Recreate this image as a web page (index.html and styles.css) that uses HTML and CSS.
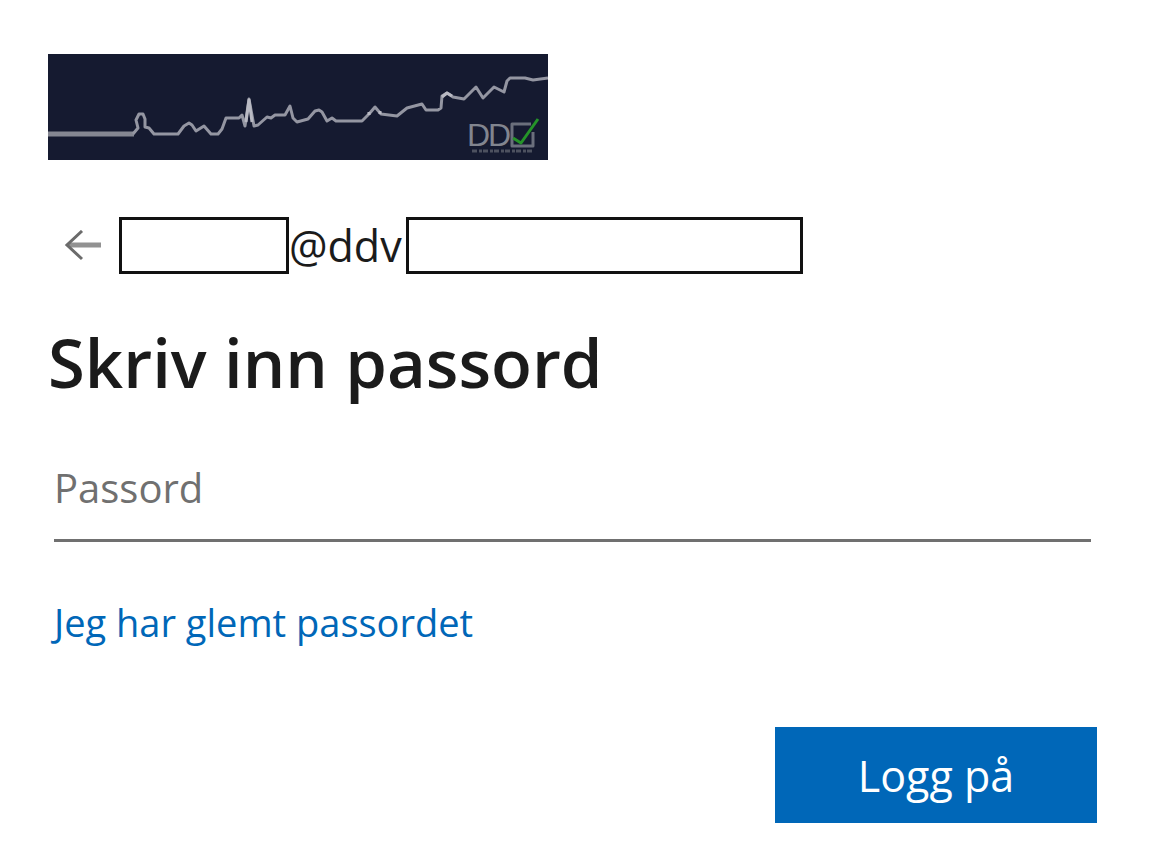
FILE: index.html
```
<!DOCTYPE html>
<html lang="no">
<head>
    <meta charset="UTF-8">
    <meta name="viewport" content="width=device-width, initial-scale=1.0">
    <title>Skriv inn passord</title>
    <link rel="stylesheet" href="styles.css">
</head>
<body>
    <main class="login">
        <svg class="banner" viewBox="0 0 500 106" role="img" aria-label="DDV">
            <rect width="500" height="106" fill="#151a30"/>
            <path class="banner-base" d="M0 80H86"/>
            <path class="banner-line" d="M85 80L90 74L88 66L91 60H95L97 65V73L101 74L106 80H130L136 72L141 69L144 71L148 77L156 72L163 80H170L174 75L178 64H191L194 61L197 72L201 45L206 72L210 71L219 63L223 64L227 61H237L242 52L245 64L249 68L260 65L267 57L271 56L274 58L279 67L284 64L288 67H314L321 60L327 53L333 60L349 62L359 54L374 50L378 56H390L393 54L394 42L399 39L405 43L416 45L428 33L435 44L446 33L456 38L459 27L462 24H477L485 26L500 24"/>
            <path class="banner-peak" d="M198 68L201 46L204 68M321 61V58M332 60V57M394 43L399 39L404 42"/>
            <text class="banner-text" x="419" y="92">D</text>
            <text class="banner-text" x="440" y="92">D</text>
            <path class="banner-box" d="M483 70H464V92H485V78"/>
            <path class="banner-sub" d="M424 97H484"/>
            <path class="banner-check" d="M465 84L473 89L490 65"/>
        </svg>

        <div class="account">
            <button class="back" type="button" aria-label="Tilbake">
                <svg class="back-icon" viewBox="0 0 38 32" aria-hidden="true">
                    <path class="back-shaft" d="M4 15H37"/>
                    <path class="back-head" d="M18 1L3 15L18 29"/>
                </svg>
            </button>
            <span class="mask mask-name"></span>
            <span class="account-text">@ddv</span>
            <span class="mask mask-domain"></span>
        </div>

        <h1 class="title">Skriv inn passord</h1>

        <form class="form">
            <input class="password" type="password" placeholder="Passord" aria-label="Passord">
            <a class="forgot" href="#">Jeg har glemt passordet</a>
            <button class="submit" type="submit">Logg på</button>
        </form>
    </main>
</body>
</html>
```
FILE: styles.css
```
* {
    margin: 0;
    padding: 0;
    box-sizing: border-box;
}

body {
    background-color: #fff;
    color: #1b1b1b;
    font-family: "Open Sans", "Noto Sans", sans-serif;
}

.login {
    display: flex;
    flex-direction: column;
    align-items: flex-start;
    padding: 54px 69px 36px 48px;
}

.banner {
    width: 500px;
    max-width: 100%;
}

.banner path {
    fill: none;
    stroke: #9496a2;
    stroke-width: 3;
    stroke-linejoin: round;
}

.banner .banner-base {
    stroke: #858792;
    stroke-width: 5;
}

.banner .banner-peak {
    stroke: #b9bac3;
}

.banner-text {
    fill: #82858f;
    font-family: "Liberation Sans", sans-serif;
    font-size: 32px;
}

.banner .banner-box {
    stroke: #6b6f7c;
}

.banner .banner-sub {
    stroke: #4d515f;
    stroke-dasharray: 5 2 3 1;
}

.banner .banner-check {
    stroke: #259329;
}

.account {
    display: flex;
    align-items: center;
    margin-top: 57px;
}

.back {
    display: flex;
    width: 71px;
    padding-left: 16px;
    border: 0;
    background: none;
    cursor: pointer;
}

.back-icon {
    width: 38px;
    height: 32px;
    fill: none;
}

.back-shaft {
    stroke: #929292;
    stroke-width: 5;
}

.back-head {
    stroke: #6b6b6b;
    stroke-width: 3;
}

.mask {
    height: 57px;
    border: 3px solid #111;
    background-color: #fff;
}

.mask-name {
    width: 170px;
}

.mask-domain {
    width: 397px;
}

.account-text {
    padding-right: 4px;
    font-size: 43px;
    line-height: 56px;
}

.title {
    margin-top: 40px;
    font-size: 67px;
    font-weight: 600;
    line-height: 96px;
}

.form {
    display: flex;
    flex-direction: column;
    align-items: flex-start;
    align-self: stretch;
    padding-left: 6px;
}

.password {
    align-self: stretch;
    height: 100px;
    margin: 32px 6px 0 0;
    padding-bottom: 6px;
    border: 0;
    border-bottom: 3px solid #707070;
    outline: 0;
    background: none;
    color: #1b1b1b;
    font-family: inherit;
    font-size: 40px;
}

.password::placeholder {
    color: #707070;
    opacity: 1;
}

.forgot {
    margin-top: 52px;
    color: #0067b8;
    font-size: 38px;
    line-height: 56px;
    text-decoration: none;
}

.submit {
    align-self: flex-end;
    width: 322px;
    height: 96px;
    margin-top: 77px;
    border: 0;
    background-color: #0067b8;
    color: #fff;
    font-family: inherit;
    font-size: 43px;
    cursor: pointer;
}
```
